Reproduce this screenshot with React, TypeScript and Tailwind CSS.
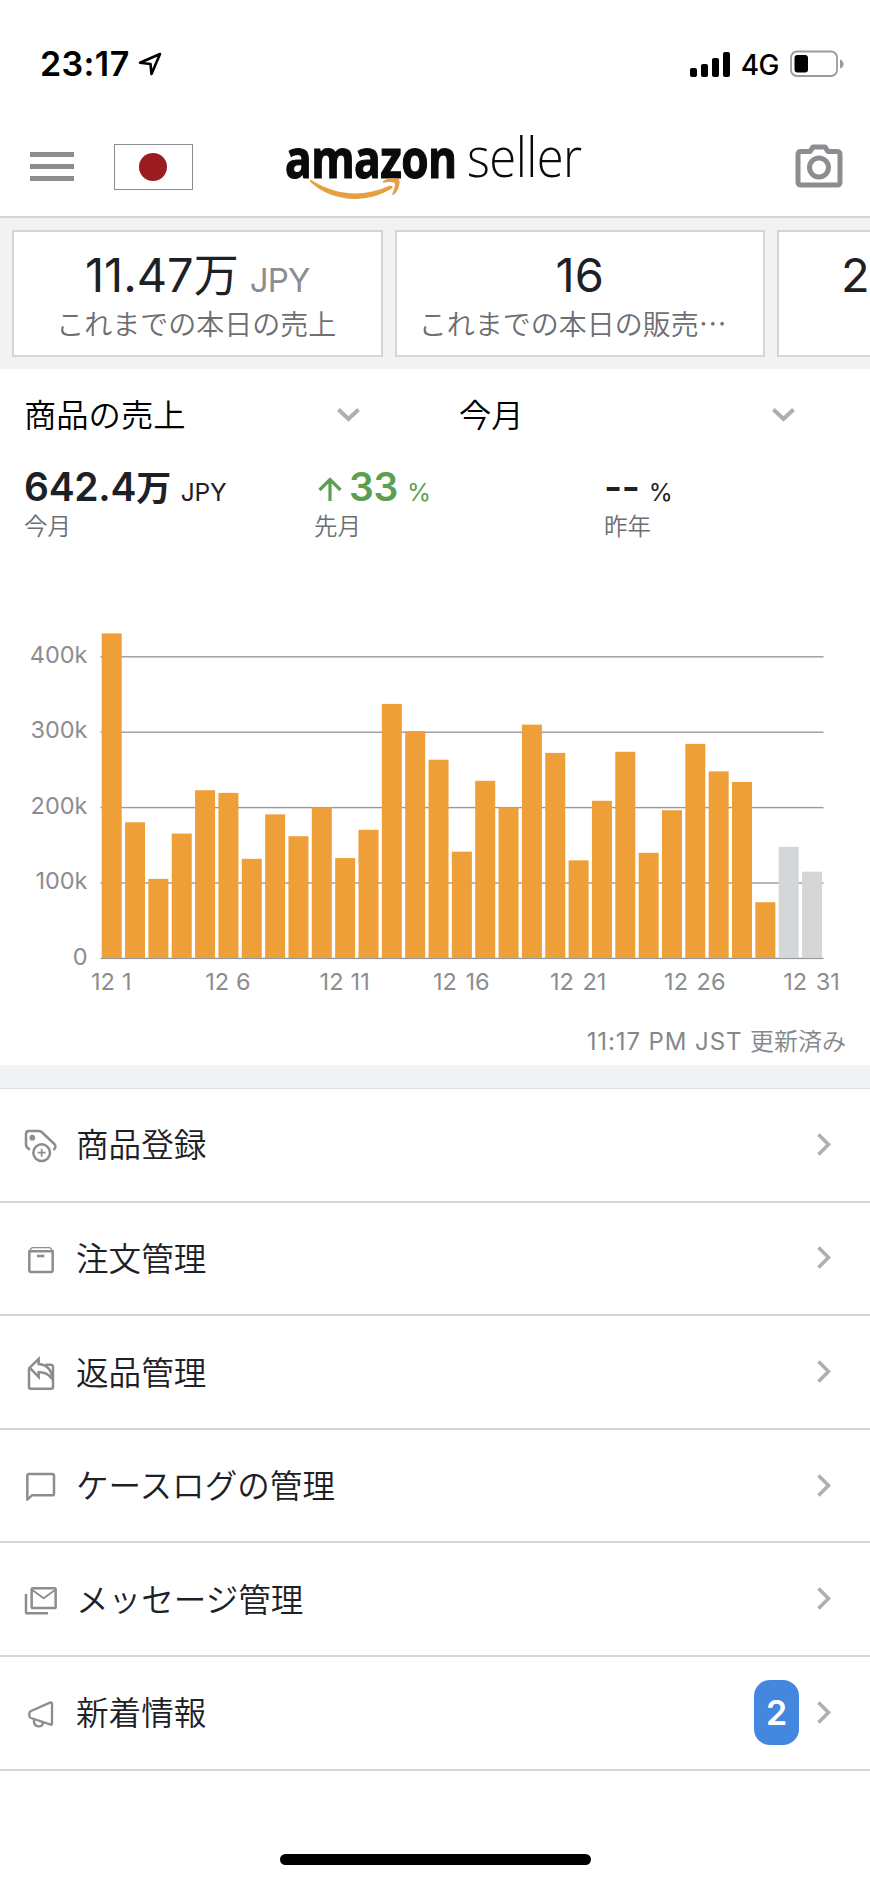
import type { ReactNode } from "react";

const kpis = [
  { value: "11.47", suffix: "万", unit: "JPY", label: "これまでの本日の売上" },
  { value: "16", suffix: "", unit: "", label: "これまでの本日の販売…" },
];

const sales = [
  430.5, 180, 105, 165, 222.5, 219, 131.5, 190.5, 161.5, 200, 132.5, 170, 337, 301, 263, 141, 235,
  200, 309.5, 272, 129.5, 208.5, 273.5, 139.5, 196, 284, 247.5, 233.5, 74, 147.5, 114.5,
];
const forecastFrom = 29;

const ticks = [0, 100, 200, 300, 400];
const days = [1, 6, 11, 16, 21, 26, 31];

const baseline = 358.5;
const scale = 0.754;
const step = 23.345;

function Chart() {
  return (
    <svg width="870" height="400" viewBox="0 0 870 400" className="block shrink-0">
      {ticks.map((t) => (
        <rect key={t} x="100.5" y={baseline - t * scale - 0.8} width="723" height="1.4" fill="#97999b" />
      ))}
      {sales.map((v, i) => (
        <rect
          key={i}
          x={101.7 + i * step}
          y={baseline - 0.5 - v * scale}
          width="20"
          height={v * scale}
          fill={i < forecastFrom ? "#ee9f37" : "#d5d6d7"}
        />
      ))}
      <g fill="#8b8d91" fontSize="23.5">
        {ticks.map((t) => (
          <text key={t} x="87.5" y={baseline - t * scale + 6} textAnchor="end">
            {t === 0 ? "0" : `${t}k`}
          </text>
        ))}
        {days.map((d) => (
          <text key={d} x={111.2 + (d - 1) * step} y="390" textAnchor="middle" wordSpacing={d > 11 ? 2 : 0.5}>
            {`12 ${d}`}
          </text>
        ))}
      </g>
    </svg>
  );
}

function Icon({ children }: { children: ReactNode }) {
  return (
    <svg
      width="34"
      height="34"
      viewBox="0 0 102 102"
      className="shrink-0 overflow-visible"
      fill="none"
      stroke="#8b8d91"
      strokeWidth="7.5"
      strokeLinejoin="round"
    >
      {children}
    </svg>
  );
}

const menu = [
  {
    label: "商品登録",
    icon: (
      <>
        <path d="M18 65Q6 59 6 49V18Q6 9 15 9H44Q49 9 53 12L91 48Q99 56 88 66" />
        <circle cx="25" cy="29" r="8.5" fill="#8b8d91" stroke="none" />
        <circle cx="53" cy="74" r="25" />
        <path d="M53 62V86M41 74H65" strokeWidth="5" />
      </>
    ),
  },
  {
    label: "注文管理",
    icon: (
      <>
        <path d="M16 31V88Q16 93 21 93H81Q86 93 86 88V31Z" />
        <path d="M15 32L21 23Q23 20 27 20H75Q79 20 81 23L87 32" strokeWidth="4" />
        <path d="M39 45H61" strokeWidth="8" />
      </>
    ),
  },
  {
    label: "返品管理",
    icon: (
      <>
        <path d="M15 40V96Q15 101 20 101H82Q87 101 87 96V36Q87 29 80 29L64 29" />
        <path d="M44 12L17 38L44 66V52Q70 50 86 74Q82 30 44 27Z" strokeLinejoin="miter" />
      </>
    ),
  },
  {
    label: "ケースログの管理",
    icon: <path d="M10 92V20Q10 15 15 15H85Q90 15 90 20V74Q90 79 85 79H24Z" />,
  },
  {
    label: "メッセージ管理",
    icon: (
      <>
        <rect x="23" y="19" width="72" height="59" rx="4" />
        <path d="M25 24L59 49L93 24" strokeWidth="5.5" />
        <path d="M6 36V90Q6 94 10 94H72" />
      </>
    ),
  },
  {
    label: "新着情報",
    badge: 2,
    icon: (
      <>
        <path d="M84 23Q84 18 78 20L21 45Q16 48 16 52V60Q16 64 21 66L80 86Q84 87 84 83Z" strokeWidth="7" />
        <path d="M30 71V78Q32 91 45 91Q55 91 57 80" strokeWidth="7" />
      </>
    ),
  },
];

function ChevronDown() {
  return (
    <svg width="23" height="14" viewBox="0 0 23 14" className="-mt-px" fill="none" stroke="#adafb2" strokeWidth="4">
      <path d="M1.5 1.5L11.5 11L21.5 1.5" />
    </svg>
  );
}

function Logo() {
  return (
    <svg
      width="300"
      height="90"
      viewBox="0 -20 300 90"
      className="absolute left-[284px] top-[110px] overflow-visible font-['Open_Sans',sans-serif]"
      fill="#0a0a0a"
    >
      <g transform="translate(1 47.5) scale(0.82 1)">
        <text fontSize="54" fontWeight="700" textLength="210" stroke="#0a0a0a" strokeWidth="1.2">
          amazon
        </text>
      </g>
      <g transform="translate(183 47) scale(0.9 1)">
        <text fontSize="54.5" fontWeight="300" textLength="128">
          seller
        </text>
      </g>
      <path d="M26 50Q27 49.500 29 51C53 66 80 67 105 56C108 55 110 57 107 59C82 74 48 72 27 52.500Q25.500 51 26 50Z" fill="#e89f43" />
      <path d="M99 51C105 47 112 48 115 49.500C117 52 114 62 109.500 65C108 65.500 108 64 109 62C110.500 58 112 54 110.500 53C108 51.500 103 52 100 52.500Q98 52.500 99 51Z" fill="#e89f43" />
    </svg>
  );
}

export default function App() {
  return (
    <div className="flex h-[1884px] w-[870px] flex-col overflow-hidden bg-white font-['Inter','Noto_Sans_CJK_JP',sans-serif] text-[#1d2126]">
      <div className="flex h-[116px] shrink-0 items-center justify-between pl-10 pr-[26px] pt-[11px] text-black">
        <div className="flex items-center gap-2">
          <span className="text-[34px] font-semibold leading-none tracking-[0.4px]">23:17</span>
          <svg width="24" height="24" viewBox="0 0 24 24" fill="none" stroke="#000" strokeWidth="2.6" strokeLinejoin="round">
            <path d="M22 2L2 10.800L12.500 12L13.500 22Z" />
          </svg>
        </div>
        <div className="flex items-center">
          <svg width="40" height="26" viewBox="0 0 40 26">
            <rect x="0" y="17" width="7" height="9" rx="2" />
            <rect x="11" y="13" width="7" height="13" rx="2" />
            <rect x="22" y="7" width="7" height="19" rx="2" />
            <rect x="33" y="1" width="7" height="25" rx="2" />
          </svg>
          <span className="ml-[11px] pt-[2px] text-[28px] font-medium leading-none tracking-[-0.5px]">4G</span>
          <svg width="54" height="28" viewBox="0 0 54 28" className="ml-[11px]">
            <rect x="1" y="1.500" width="46" height="24.500" rx="6" fill="none" stroke="#9b9b9b" strokeWidth="1.800" />
            <rect x="4.500" y="5" width="13.500" height="17.500" rx="3" />
            <path d="M50 9.500Q53.500 10.500 53.500 14Q53.500 17.500 50 18.500Z" fill="#9b9b9b" />
          </svg>
        </div>
      </div>

      <header className="flex h-[102px] shrink-0 items-center border-b-2 border-[#d4d5d7] pl-[30px] pr-[27px]">
        <div className="flex w-11 flex-col gap-[7px]">
          <div className="h-[5px] bg-[#8b8d91]" />
          <div className="h-[5px] bg-[#8b8d91]" />
          <div className="h-[5px] bg-[#8b8d91]" />
        </div>
        <div className="ml-10 mt-0.5 flex h-[46px] w-[79px] items-center justify-center border border-[#8b8d91]">
          <div className="mr-px size-7 rounded-full bg-[#9b1c20]" />
        </div>
        <Logo />
        <svg width="48" height="44" viewBox="0 0 48 44" className="ml-auto" fill="none" stroke="#8b8d91" strokeWidth="5" strokeLinejoin="round">
          <path d="M6 7.500H15L18 3H30L33 7.500H42Q45 7.500 45 10.500V38Q45 41 42 41H6Q3 41 3 38V10.500Q3 7.500 6 7.500Z" />
          <circle cx="24" cy="23.500" r="9.500" />
        </svg>
      </header>

      <section className="flex h-[151px] shrink-0 gap-3 bg-[#f1f2f4] p-3">
        {kpis.map((k) => (
          <div key={k.label} className="flex h-[127px] w-[370.500px] shrink-0 flex-col items-center border-2 border-[#d4d5d7] bg-white pt-[15px]">
            <div className="flex h-14 items-baseline text-[47px] leading-[56px]">
              {k.value}
              {k.suffix && <span className="text-[45px] leading-none">{k.suffix}</span>}
              {k.unit && <span className="ml-[11px] text-[33px] leading-none tracking-[-0.8px] text-[#8b8d91]">{k.unit}</span>}
            </div>
            {k.unit ? (
              <div className="mt-[3px] whitespace-nowrap pr-0.5 font-['Noto_Sans_CJK_JP',sans-serif] text-[28px] font-[350] leading-[34px] text-[#6d6f73]">{k.label}</div>
            ) : (
              <div className="mt-[3px] whitespace-nowrap pr-3.5 font-['Noto_Sans_CJK_JP',sans-serif] text-[28px] font-[350] leading-[34px] text-[#6d6f73]">{k.label}</div>
            )}
          </div>
        ))}
        <div className="h-[127px] w-[371px] shrink-0 border-2 border-[#d4d5d7] bg-white pl-[62px] pt-[15px] text-[47px] leading-[56px]">2</div>
      </section>

      <section className="flex h-[231px] shrink-0 flex-col">
        <div className="flex h-[93px] text-[32.300px] font-[350] text-black">
          <div className="flex w-[435px] items-center pl-6">
            <span className="w-[313px] pt-0.5">商品の売上</span>
            <ChevronDown />
          </div>
          <div className="flex w-[435px] items-center pl-6">
            <span className="w-[313px] pt-0.5">今月</span>
            <ChevronDown />
          </div>
        </div>
        <div className="flex pl-6">
          <div className="w-[290px]">
            <div className="flex h-[50px] items-baseline text-[39px] font-semibold leading-[50px] tracking-[-0.3px]">
              642.4<span className="text-[35px] leading-none">万</span>
              <span className="ml-2.5 text-[24.500px] font-normal leading-none">JPY</span>
            </div>
            <div className="-mt-px text-[23.500px] font-[350] leading-8 text-[#6d6f73]">今月</div>
          </div>
          <div className="w-[290px]">
            <div className="flex h-[50px] items-baseline text-[39px] font-semibold leading-[50px] tracking-[-0.3px] text-[#5c9f52]">
              <svg width="24" height="24" viewBox="0 0 24 24" className="ml-1 mr-[7px]" fill="none" stroke="#5c9f52" strokeWidth="3.200">
                <path d="M12 24V3M1.500 13L12 2.500L22.500 13" />
              </svg>
              33<span className="ml-[9px] text-[24.500px] font-normal leading-none">%</span>
            </div>
            <div className="-mt-px text-[23.500px] font-[350] leading-8 text-[#6d6f73]">先月</div>
          </div>
          <div>
            <div className="flex h-[50px] items-baseline text-[39px] font-semibold leading-[50px] tracking-[-0.3px]">
              --<span className="ml-[9px] text-[24.500px] font-normal leading-none">%</span>
            </div>
            <div className="-mt-px text-[23.500px] font-[350] leading-8 text-[#6d6f73]">昨年</div>
          </div>
        </div>
      </section>

      <Chart />

      <div className="flex h-[65px] shrink-0 items-center justify-end pr-6 pt-[18px] text-2xl font-[350] text-[#85878b]">
        <span className="font-normal tracking-[0.9px]">11:17 PM JST&nbsp;</span>更新済み
      </div>
      <div className="h-6 shrink-0 border-b border-[#dcdddf] bg-[#f1f2f4]" />

      <nav className="flex flex-col">
        {menu.map((m) => (
          <div key={m.label} className="flex h-[113.600px] items-center border-b-2 border-[#d4d5d7] pl-[23.500px] pr-[39px]">
            <Icon>{m.icon}</Icon>
            <span className="ml-[18.500px] pt-[2px] text-[32.600px] font-[350]">{m.label}</span>
            <div className="ml-auto flex items-center gap-[18px]">
              {m.badge && (
                <span className="flex h-[65px] w-[45px] items-center justify-center rounded-2xl bg-[#4487df] text-[34px] font-semibold text-white">
                  {m.badge}
                </span>
              )}
              <svg width="14" height="23" viewBox="0 0 14 23" className="-mt-px" fill="none" stroke="#adafb2" strokeWidth="3.600">
                <path d="M1.500 1.500L11.500 11.500L1.500 21.500" />
              </svg>
            </div>
          </div>
        ))}
      </nav>

      <div className="mb-[19px] mt-auto h-[11px] w-[311px] shrink-0 self-center rounded-full bg-black" />
    </div>
  );
}
